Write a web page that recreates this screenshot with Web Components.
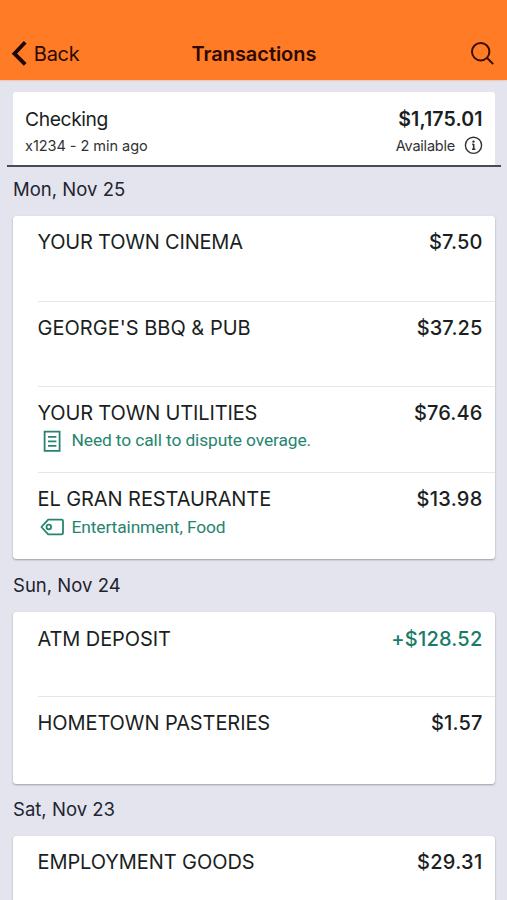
<!DOCTYPE html>
<html lang="en">
<head>
<meta charset="utf-8">
<title>Transactions</title>
<style>
html, body { margin: 0; height: 100%; }
body { background: #e3e4ed; overflow: hidden; font-family: Inter, "Liberation Sans", sans-serif; color: #1b1f23; }
</style>
</head>
<body>
<bank-app></bank-app>
<script>
const define = (name, html, init) => {
  const tpl = document.createElement('template');
  tpl.innerHTML = html;
  customElements.define(name, class extends HTMLElement {
    constructor() {
      super();
      this.attachShadow({ mode: 'open' }).append(tpl.content.cloneNode(true));
    }
    connectedCallback() { if (init) init(this, this.shadowRoot); }
  });
};

define('nav-bar', `
<style>
:host { display: flex; align-items: flex-start; justify-content: space-between; box-sizing: border-box; height: 80px; padding: 40px 13px 0 11px; background: #ff7b25; color: #2b0a03; font-size: 20px; line-height: 28px; box-shadow: 0 0 2px rgba(255,125,37,.7); }
.back { display: flex; width: 121px; letter-spacing: -.25px; }
.back svg { margin-right: 6.8px; }
.title { font-weight: 600; letter-spacing: -.04px; margin-left: 59.5px; flex: 1; white-space: nowrap; }
svg { display: block; flex: none; }
</style>
<div class="back"><svg width="16" height="27" fill="none" stroke="#1b0803" stroke-width="3.8"><path d="M14.2 2.3 3.4 13.6l10.8 10.8"/></svg><span>Back</span></div>
<div class="title"><slot></slot></div>
<svg width="24" height="27" fill="none" stroke="#3a0e03" stroke-width="2"><circle cx="10.7" cy="11.7" r="8.7"/><path d="m16.9 17.7 6.3 6.4"/></svg>
`);

define('account-summary', `
<style>
:host { display: block; margin: 12px 6px 0 7px; padding: 0 6px; border-bottom: 2px solid #4a4c53; }
.card { display: flex; flex-direction: column; gap: 3px; box-sizing: border-box; height: 73px; padding: 15px 12.5px 0 12px; background: #fff; border-radius: 3px 3px 0 0; }
.row { display: flex; justify-content: space-between; align-items: center; height: 24px; line-height: 24px; white-space: nowrap; }
.name { font-size: 19.3px; letter-spacing: -.4px; }
.amount { font-size: 19.5px; font-weight: 600; letter-spacing: .1px; }
.sub { font-size: 14.5px; color: #303236; }
.ref { letter-spacing: -.04px; }
.avail { display: flex; align-items: center; gap: 9px; letter-spacing: -.22px; }
</style>
<div class="card">
  <div class="row"><span class="name"><slot name="name"></slot></span><span class="amount"><slot name="amount"></slot></span></div>
  <div class="row sub"><span class="ref"><slot name="ref"></slot></span>
    <span class="avail"><slot name="status"></slot><svg width="18.5" height="20" fill="none" stroke="#303236"><circle cx="9.5" cy="9.3" r="8.1" stroke-width="1.4"/><path d="M9.7 8v5.2M8.2 8.4h1.5M8 13.2h3.4" stroke-width="1.6"/><circle cx="9.5" cy="5.6" r="1.2" fill="#303236" stroke="none"/></svg></span></div>
</div>
`);

define('day-group', `
<style>
:host { display: block; padding: 0 12px 0 13px; }
.date { display: flex; align-items: center; box-sizing: border-box; height: var(--date-height, 53px); padding-bottom: var(--date-drop, 1px); font-size: 18.5px; letter-spacing: .02px; color: #1f2430; white-space: nowrap; }
.list { background: #fff; border-radius: 3.5px; box-shadow: 0 1px 2px rgba(60,65,75,.42); }
</style>
<div class="date"></div>
<div class="list"><slot></slot></div>
`, (el, root) => { root.querySelector('.date').textContent = el.getAttribute('date'); });

define('transaction-row', `
<style>
:host { display: flex; flex-direction: column; box-sizing: border-box; height: var(--row-height, 85.75px); margin-left: 24.5px; padding: var(--row-top, 14px) 12.5px 0 0; gap: 3px; border-bottom: 1px solid #e5e6e8; }
:host(:last-child) { border-bottom: 0; }
.main { display: flex; justify-content: space-between; line-height: 24px; font-size: 20px; white-space: nowrap; }
.name { letter-spacing: var(--track, 0); }
.amount { font-weight: 500; letter-spacing: var(--amount-track, .12px); }
:host([credit]) .amount { color: #197b68; }
</style>
<div class="main"><span class="name"></span><span class="amount"></span></div>
<slot></slot>
`, (el, root) => {
  root.querySelector('.name').textContent = el.getAttribute('name');
  root.querySelector('.amount').textContent = el.getAttribute('amount');
});

define('transaction-note', `
<style>
:host { display: flex; height: 24px; line-height: 24px; gap: 7px; font-family: Roboto, sans-serif; font-size: 17.4px; letter-spacing: -.12px; color: #268470; white-space: nowrap; }
:host([kind="tag"]) { margin-top: 1px; }
svg { display: none; flex: none; fill: none; stroke: #268470; stroke-width: 1.8; }
:host([kind="memo"]) .memo, :host([kind="tag"]) .tag { display: block; }
</style>
<svg class="memo" width="27" height="25"><path d="M6.6 3.6h15v19.3h-15zM10 8.9h8.4M10 13.3h8.4M10 17.9h8.4"/></svg>
<svg class="tag" width="27" height="24"><path d="M10.2 4.6h13.2q1.6 0 1.6 1.5v11.6q0 1.6-1.6 1.6H10.2L3.4 12z" stroke-linejoin="round"/><circle cx="10.8" cy="12" r="2.3"/></svg>
<span><slot></slot></span>
`);

define('bank-app', `
<style>
:host { display: flex; flex-direction: column; width: 507px; height: 900px; overflow: hidden; }
:host > * { flex: none; }
.first { --date-height: 49px; --date-drop: 5px; --row-height: 85.6px; }
.third { --date-height: 52px; --date-drop: 2px; }
</style>
<nav-bar>Transactions</nav-bar>
<account-summary><span slot="name">Checking</span><span slot="amount">$1,175.01</span><span slot="ref">x1234 - 2 min ago</span><span slot="status">Available</span></account-summary>
<day-group class="first" date="Mon, Nov 25">
  <transaction-row name="YOUR TOWN CINEMA" amount="$7.50" style="--track:-.2px"></transaction-row>
  <transaction-row name="GEORGE'S BBQ &amp; PUB" amount="$37.25" style="--track:.02px"></transaction-row>
  <transaction-row name="YOUR TOWN UTILITIES" amount="$76.46" style="--track:-.15px"><transaction-note kind="memo">Need to call to dispute overage.</transaction-note></transaction-row>
  <transaction-row name="EL GRAN RESTAURANTE" amount="$13.98" style="--track:-.08px;--amount-track:.26px;--row-height:86.2px;--row-top:14.2px"><transaction-note kind="tag">Entertainment, Food</transaction-note></transaction-row>
</day-group>
<day-group date="Sun, Nov 24">
  <transaction-row credit name="ATM DEPOSIT" amount="+$128.52" style="--track:-.1px;--row-height:85px;--row-top:15px;--amount-track:.22px"></transaction-row>
  <transaction-row name="HOMETOWN PASTERIES" amount="$1.57" style="--track:-.09px;--row-height:87px;--row-top:14.5px"></transaction-row>
</day-group>
<day-group class="third" date="Sat, Nov 23">
  <transaction-row name="EMPLOYMENT GOODS" amount="$29.31" style="--track:-.08px;--amount-track:.3px"></transaction-row>
</day-group>
`);
</script>
</body>
</html>
